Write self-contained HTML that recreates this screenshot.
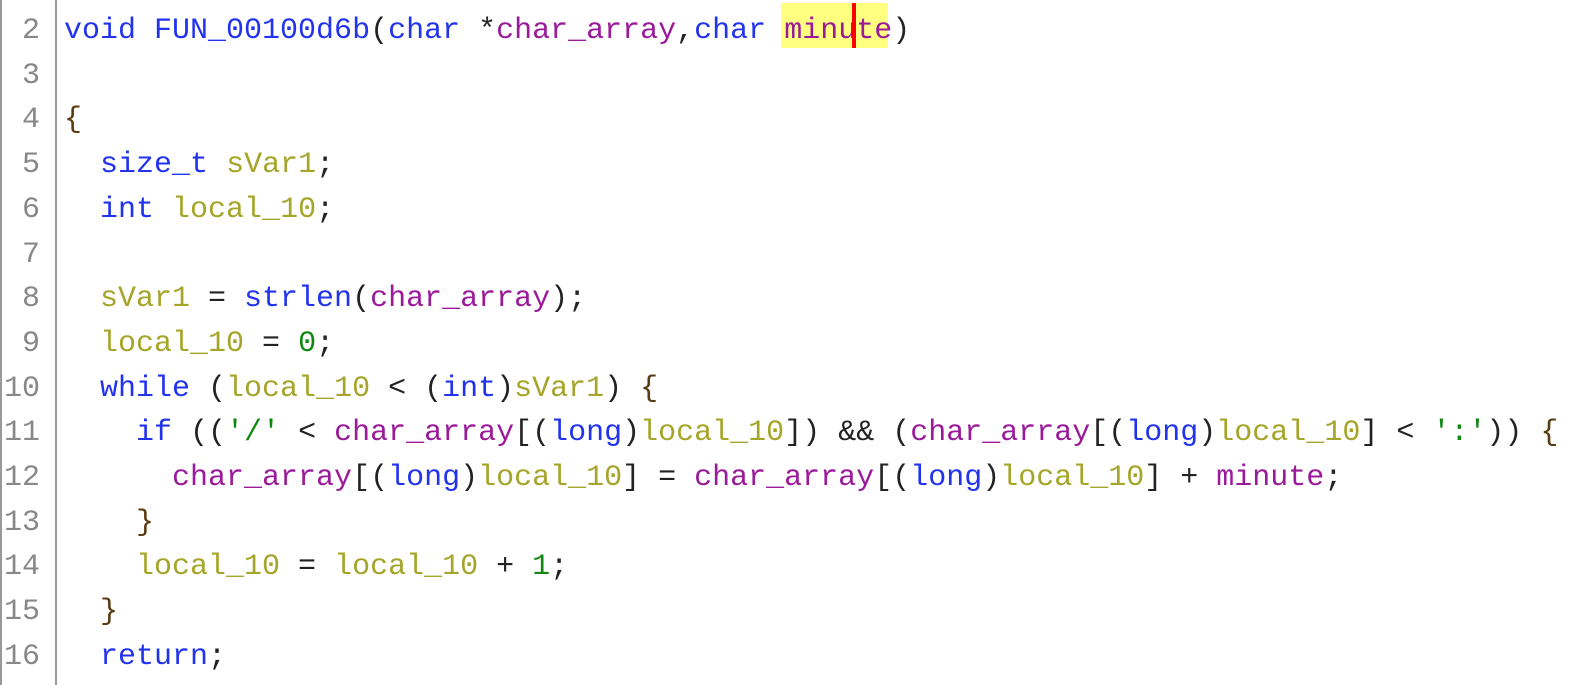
<!DOCTYPE html>
<html><head><meta charset="utf-8"><style>
body{margin:0;width:1580px;height:685px;background:#fff;overflow:hidden;position:relative;font-family:"Liberation Mono",monospace;font-size:30px;}
.lb{position:absolute;left:0;top:0;width:2px;height:685px;background:#999;}
.sep{position:absolute;left:55px;top:0;width:2px;height:685px;background:#999;}
.hl{position:absolute;left:781px;top:3px;width:107px;height:45px;background:#ffff80;}
.cur{position:absolute;left:852px;top:3px;width:4px;height:45px;background:#f00;}
.ln,.cd{position:absolute;height:44.7px;line-height:44.7px;margin-top:4px;}
.ln{left:0;width:40px;text-align:right;color:#888;}
.cd{left:64px;white-space:pre;color:#222;}
.k{color:#2233ee}.f{color:#2233ee}.v{color:#a5a52a}.p{color:#9a1a9a}.n{color:#118811}.s{color:#118811}.b{color:#5a3a10}
</style></head><body>
<div class="lb"></div><div class="sep"></div><div class="hl"></div>
<div class="ln" style="top:5px">2</div><div class="cd" style="top:5px"><span class="k">void</span> <span class="f">FUN_00100d6b</span>(<span class="k">char</span> *<span class="p">char_array</span>,<span class="k">char</span> <span class="p">minute</span>)</div>
<div class="ln" style="top:49.7px">3</div>
<div class="ln" style="top:94.4px">4</div><div class="cd" style="top:94.4px"><span class="b">{</span></div>
<div class="ln" style="top:139.1px">5</div><div class="cd" style="top:139.1px">  <span class="k">size_t</span> <span class="v">sVar1</span>;</div>
<div class="ln" style="top:183.8px">6</div><div class="cd" style="top:183.8px">  <span class="k">int</span> <span class="v">local_10</span>;</div>
<div class="ln" style="top:228.5px">7</div>
<div class="ln" style="top:273.2px">8</div><div class="cd" style="top:273.2px">  <span class="v">sVar1</span> = <span class="f">strlen</span>(<span class="p">char_array</span>);</div>
<div class="ln" style="top:317.9px">9</div><div class="cd" style="top:317.9px">  <span class="v">local_10</span> = <span class="n">0</span>;</div>
<div class="ln" style="top:362.6px">10</div><div class="cd" style="top:362.6px">  <span class="k">while</span> (<span class="v">local_10</span> &lt; (<span class="k">int</span>)<span class="v">sVar1</span>) <span class="b">{</span></div>
<div class="ln" style="top:407.3px">11</div><div class="cd" style="top:407.3px">    <span class="k">if</span> ((<span class="s">'/'</span> &lt; <span class="p">char_array</span>[(<span class="k">long</span>)<span class="v">local_10</span>]) &amp;&amp; (<span class="p">char_array</span>[(<span class="k">long</span>)<span class="v">local_10</span>] &lt; <span class="s">':'</span>)) <span class="b">{</span></div>
<div class="ln" style="top:452px">12</div><div class="cd" style="top:452px">      <span class="p">char_array</span>[(<span class="k">long</span>)<span class="v">local_10</span>] = <span class="p">char_array</span>[(<span class="k">long</span>)<span class="v">local_10</span>] + <span class="p">minute</span>;</div>
<div class="ln" style="top:496.7px">13</div><div class="cd" style="top:496.7px">    <span class="b">}</span></div>
<div class="ln" style="top:541.4px">14</div><div class="cd" style="top:541.4px">    <span class="v">local_10</span> = <span class="v">local_10</span> + <span class="n">1</span>;</div>
<div class="ln" style="top:586.1px">15</div><div class="cd" style="top:586.1px">  <span class="b">}</span></div>
<div class="ln" style="top:630.8px">16</div><div class="cd" style="top:630.8px">  <span class="k">return</span>;</div>
<div class="cur"></div>
</body></html>
